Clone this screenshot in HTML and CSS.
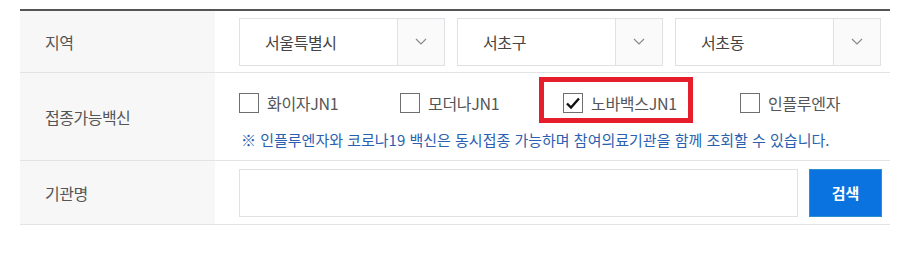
FILE: index.html
```html
<!DOCTYPE html>
<html lang="ko">
  <head>
    <meta charset="UTF-8" />
    <meta name="viewport" content="width=device-width, initial-scale=1.0" />
    <title>의료기관 조회</title>
    <link rel="stylesheet" href="styles.css">
  </head>
  <body>
    <div class="search-table">
      <div class="row row-region">
        <div class="label">지역</div>
        <div class="cell selects">
          <div class="select">
            <span class="select-text">서울특별시</span>
            <span class="select-arrow"><svg width="12" height="7" viewBox="0 0 12 7"><path d="M1 1l5 5 5-5" fill="none" stroke="#8a8a8a" stroke-width="1.2"/></svg></span>
          </div>
          <div class="select">
            <span class="select-text">서초구</span>
            <span class="select-arrow"><svg width="12" height="7" viewBox="0 0 12 7"><path d="M1 1l5 5 5-5" fill="none" stroke="#8a8a8a" stroke-width="1.2"/></svg></span>
          </div>
          <div class="select">
            <span class="select-text">서초동</span>
            <span class="select-arrow"><svg width="12" height="7" viewBox="0 0 12 7"><path d="M1 1l5 5 5-5" fill="none" stroke="#8a8a8a" stroke-width="1.2"/></svg></span>
          </div>
        </div>
      </div>

      <div class="row row-vaccine">
        <div class="label">접종가능백신</div>
        <div class="cell vaccine">
          <div class="checks">
            <label class="check"><span class="box"></span>화이자JN1</label>
            <label class="check"><span class="box"></span>모더나JN1</label>
            <label class="check highlight"><span class="box checked"><svg width="16" height="14" viewBox="0 0 16 14"><path d="M2 7.5l4 4L14 2.5" fill="none" stroke="#111" stroke-width="2.4"/></svg></span>노바백스JN1</label>
            <label class="check"><span class="box"></span>인플루엔자</label>
          </div>
          <p class="note">※ 인플루엔자와 코로나19 백신은 동시접종 가능하며 참여의료기관을 함께 조회할 수 있습니다.</p>
        </div>
      </div>

      <div class="row row-name">
        <div class="label">기관명</div>
        <div class="cell name">
          <input type="text" class="name-input" />
          <button type="button" class="search-btn">검색</button>
        </div>
      </div>
    </div>
  </body>
</html>
```

FILE: styles.css
```css
body {
  margin: 0;
  background-color: #ffffff;
  font-family: "Noto Sans CJK KR", "Noto Sans", sans-serif;
  color: #444444;
}

.search-table {
  margin: 9px 0 0 20px;
  width: 870px;
  border-top: 2px solid #555555;
}

.row {
  display: grid;
  grid-template-columns: 195px 1fr;
  border-bottom: 1px solid #e3e3e3;
}

.row-region {
  height: 61px;
}

.row-vaccine {
  height: 87px;
}

.row-name {
  height: 63px;
}

.label {
  background-color: #f7f7f7;
  display: flex;
  align-items: center;
  padding-left: 25px;
  font-size: 16px;
  color: #555555;
  letter-spacing: -0.5px;
}

.cell {
  padding: 0 8px 0 24px;
  display: flex;
  align-items: center;
}

.selects {
  gap: 12px;
}

.select {
  width: 206px;
  height: 48px;
  box-sizing: border-box;
  border: 1px solid #dfe1e5;
  display: flex;
}

.select-text {
  flex: 1;
  display: flex;
  align-items: center;
  padding-left: 25px;
  font-size: 16px;
  color: #444444;
  letter-spacing: -0.4px;
}

.select-arrow {
  width: 46px;
  border-left: 1px solid #dfe1e5;
  background-color: #fafafb;
  display: flex;
  align-items: center;
  justify-content: center;
}

.vaccine {
  flex-direction: column;
  align-items: flex-start;
  justify-content: flex-start;
  padding-top: 20px;
}

.checks {
  display: grid;
  grid-template-columns: 161px 163px 177px auto;
}

.check {
  display: flex;
  align-items: center;
  white-space: nowrap;
  font-size: 16px;
  color: #555555;
  letter-spacing: -0.3px;
  height: 20px;
  position: relative;
}

.box {
  width: 20px;
  height: 20px;
  box-sizing: border-box;
  border: 1px solid #6f6f6f;
  background-color: #ffffff;
  margin-right: 8px;
  display: flex;
  align-items: center;
  justify-content: center;
}

.highlight::after {
  content: "";
  position: absolute;
  left: -24px;
  top: -16px;
  width: 154px;
  height: 46px;
  box-sizing: border-box;
  border: 5px solid #e61e2b;
}

.note {
  margin: 16px 0 0 2px;
  font-size: 15px;
  color: #2b5fb0;
  letter-spacing: 0;
  white-space: nowrap;
}

.name {
  gap: 11px;
}

.name-input {
  width: 559px;
  height: 48px;
  box-sizing: border-box;
  border: 1px solid #dfe1e5;
  margin: 0;
  padding: 0 10px;
}

.search-btn {
  width: 73px;
  height: 48px;
  box-sizing: border-box;
  background-color: #0a73df;
  border: 1px solid #2a90cf;
  color: #ffffff;
  font-family: "Noto Sans CJK KR", sans-serif;
  font-size: 15px;
  font-weight: bold;
  cursor: pointer;
}
```
